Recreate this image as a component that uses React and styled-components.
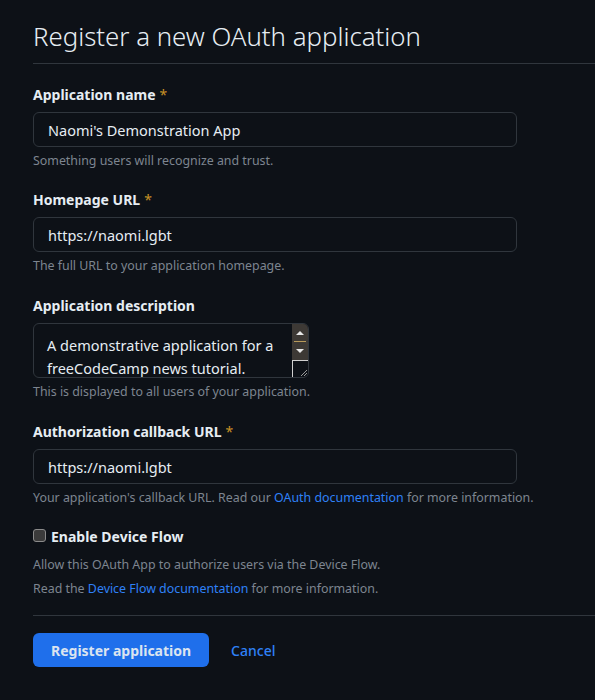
import React from "react";
import styled, { createGlobalStyle } from "styled-components";

const GlobalStyle = createGlobalStyle`
  html, body {
    margin: 0;
    padding: 0;
    background: #0d1117;
  }
  body {
    font-family: "Noto Sans", "Liberation Sans", sans-serif;
    color: #e6edf3;
  }
`;

const Page = styled.div`
  width: 595px;
  height: 700px;
  overflow: hidden;
  padding: 18px 0 0 33px;
  box-sizing: border-box;
`;

const Header = styled.div`
  border-bottom: 1px solid #30363d;
  padding-bottom: 8px;
  margin-bottom: 21px;
  width: 700px;
`;

const Title = styled.h1`
  margin: 0;
  font-size: 25.8px;
  line-height: 37px;
  font-weight: 300;
  color: #e6edf3;
`;

const Group = styled.div`
  margin-bottom: ${(p) => p.$gap || 20}px;
`;

const Label = styled.label`
  display: block;
  font-size: 14px;
  line-height: 20px;
  font-weight: 700;
  margin-bottom: 7px;
`;

const Star = styled.span`
  color: #c69026;
  font-weight: 400;
  margin-left: 4px;
`;

const Input = styled.input`
  display: block;
  box-sizing: border-box;
  width: 484px;
  height: 35px;
  padding: 0 14px;
  background: #0d1117;
  border: 1px solid #30363d;
  border-radius: 6px;
  color: #e6edf3;
  font-family: inherit;
  font-size: 14.5px;
  outline: none;
`;

const Note = styled.p`
  margin: ${(p) => p.$top || 5}px 0 0;
  font-size: 12.4px;
  line-height: 18px;
  color: #7d8590;
`;

const Link = styled.a`
  color: #2f81f7;
  text-decoration: none;
`;

const AreaBox = styled.div`
  display: flex;
  box-sizing: border-box;
  width: 276px;
  height: 55px;
  margin: 1px 0 2px;
  border: 1px solid #30363d;
  border-radius: 6px;
  overflow: hidden;
`;

const Area = styled.textarea`
  flex: 1;
  resize: none;
  overflow: hidden;
  border: 0;
  background: transparent;
  color: #e6edf3;
  font-family: inherit;
  font-size: 14.5px;
  line-height: 23px;
  padding: 10px 0 0 13px;
  outline: none;
`;

const Scroll = styled.div`
  width: 16px;
  display: flex;
  flex-direction: column;
`;

const Track = styled.div`
  flex: 1;
  background: #3d3935;
  display: flex;
  flex-direction: column;
  align-items: center;
  justify-content: space-around;
  padding: 4px 0;
`;

const Arrow = styled.span`
  width: 0;
  height: 0;
  border-left: 4px solid transparent;
  border-right: 4px solid transparent;
  ${(p) =>
    p.$down
      ? "border-top: 4px solid #e8e8e8;"
      : "border-bottom: 4px solid #e8e8e8;"}
`;

const Thumb = styled.span`
  width: 12px;
  height: 1px;
  background: #b89a5a;
`;

const Grip = styled.div`
  height: 17px;
  box-sizing: border-box;
  border-left: 1px solid #d0d0d0;
  border-top: 1px solid #d0d0d0;
  background: #0d1117;
  display: flex;
  align-items: flex-end;
  justify-content: flex-end;
`;

const CheckRow = styled.div`
  display: flex;
  align-items: center;
  gap: 5px;
  font-size: 14px;
  line-height: 20px;
  font-weight: 700;
`;

const Box = styled.span`
  width: 13px;
  height: 13px;
  box-sizing: border-box;
  border: 1px solid #8b8b8b;
  border-radius: 3px;
  background: #3b3b3b;
  margin-top: -4px;
`;

const Rule = styled.div`
  width: 700px;
  border-top: 1px solid #30363d;
  margin: 17px 0 17px;
`;

const Actions = styled.div`
  display: flex;
  align-items: center;
  gap: 22px;
`;

const Primary = styled.button`
  height: 34px;
  padding: 0 18px;
  border: 0;
  border-radius: 6px;
  background: #1f6feb;
  color: #dbe4f0;
  font-family: inherit;
  font-size: 14px;
  font-weight: 700;
`;

const Cancel = styled.a`
  color: #2f81f7;
  font-size: 14px;
  font-weight: 500;
`;

export default function App() {
  return (
    <Page>
      <GlobalStyle />
      <Header>
        <Title>Register a new OAuth application</Title>
      </Header>

      <Group>
        <Label>
          Application name<Star>*</Star>
        </Label>
        <Input defaultValue="Naomi's Demonstration App" />
        <Note>Something users will recognize and trust.</Note>
      </Group>

      <Group $gap={21}>
        <Label>
          Homepage URL<Star>*</Star>
        </Label>
        <Input defaultValue="https://naomi.lgbt" />
        <Note>The full URL to your application homepage.</Note>
      </Group>

      <Group $gap={21}>
        <Label>Application description</Label>
        <AreaBox>
          <Area defaultValue="A demonstrative application for a freeCodeCamp news tutorial." />
          <Scroll>
            <Track>
              <Arrow />
              <Thumb />
              <Arrow $down />
            </Track>
            <Grip>
              <svg width="10" height="10" viewBox="0 0 10 10">
                <path d="M9 3 L3 9 M9 6 L6 9" stroke="#9a9a9a" strokeWidth="1" />
              </svg>
            </Grip>
          </Scroll>
        </AreaBox>
        <Note>This is displayed to all users of your application.</Note>
      </Group>

      <Group $gap={20}>
        <Label>
          Authorization callback URL<Star>*</Star>
        </Label>
        <Input defaultValue="https://naomi.lgbt" />
        <Note>
          Your application's callback URL. Read our{" "}
          <Link>OAuth documentation</Link> for more information.
        </Note>
      </Group>

      <CheckRow>
        <Box />
        Enable Device Flow
      </CheckRow>
      <Note $top={9}>Allow this OAuth App to authorize users via the Device Flow.</Note>
      <Note $top={6}>
        Read the <Link>Device Flow documentation</Link> for more information.
      </Note>

      <Rule />

      <Actions>
        <Primary>Register application</Primary>
        <Cancel>Cancel</Cancel>
      </Actions>
    </Page>
  );
}
